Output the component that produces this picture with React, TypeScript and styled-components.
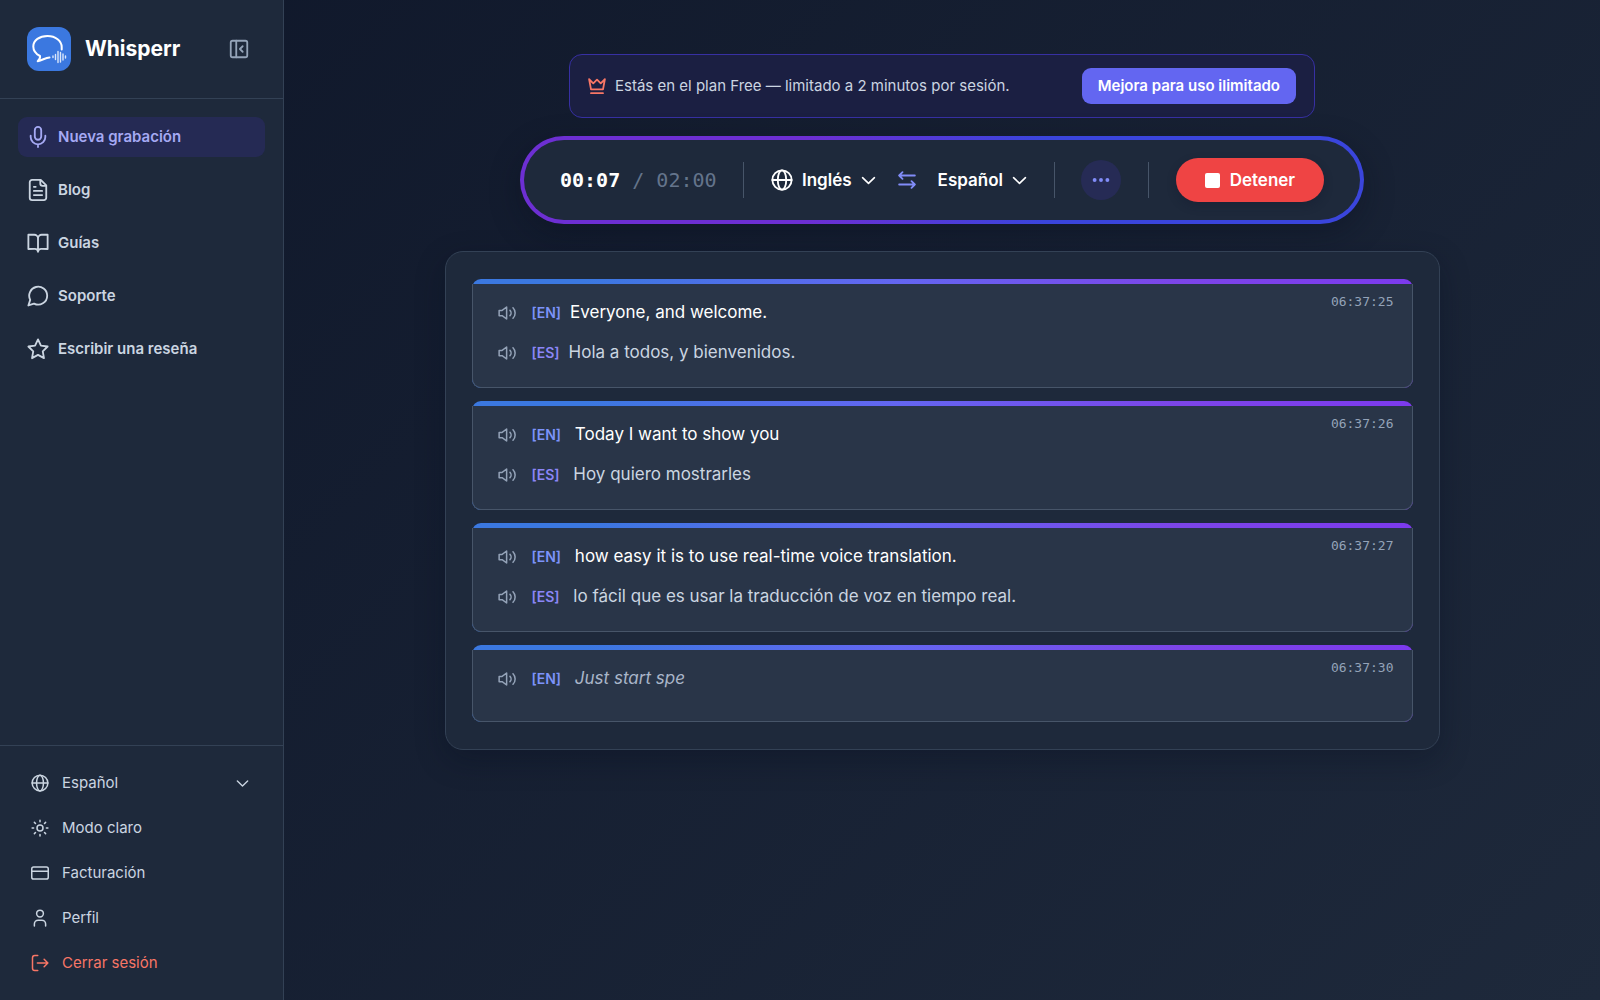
import React from "react";
import styled, { createGlobalStyle } from "styled-components";

const sans = `Inter, "Liberation Sans", sans-serif`;
const mono = `"DejaVu Sans Mono", "Liberation Mono", monospace`;

const GlobalStyle = createGlobalStyle`
  *, *::before, *::after { box-sizing: border-box; }
  body {
    margin: 0;
    font-family: ${sans};
    font-size: 15px;
    line-height: 24px;
    color: #cbd5e1;
    background: #0f172a;
    -webkit-font-smoothing: antialiased;
  }
  button, select { font: inherit; color: inherit; background: none; border: 0; margin: 0; padding: 0; cursor: pointer; }
  a { color: inherit; text-decoration: none; }
  svg { display: block; flex: none; }
`;

const Page = styled.div`
  display: flex;
  min-height: 100vh;
  background: linear-gradient(135deg, #0f172a 0%, #1e293b 100%);
`;

const Sidebar = styled.aside`
  display: flex;
  flex-direction: column;
  flex: none;
  width: 284px;
  background: #1e293b;
  border-right: 1px solid #334155;
`;

const Brand = styled.header`
  display: flex;
  align-items: center;
  gap: 14px;
  height: 99px;
  padding: 0 33px 0 27px;
  border-bottom: 1px solid #334155;
`;

const BrandName = styled.span`
  flex: 1;
  font-size: 21px;
  line-height: 32px;
  font-weight: 700;
  color: #fff;
`;

const IconButton = styled.button`
  display: flex;
  color: #94a3b8;
`;

const Nav = styled.nav`
  display: flex;
  flex-direction: column;
  gap: 13px;
  padding: 18px;
`;

const NavLink = styled.a<{ $active?: boolean }>`
  display: flex;
  align-items: center;
  gap: 9px;
  height: 40px;
  padding: 0 9px;
  border-radius: 9px;
  font-weight: 600;
  color: ${(p) => (p.$active ? "#a5a9f3" : "#cbd5e1")};
  background: ${(p) => (p.$active ? "#252a54" : "transparent")};
`;

const Account = styled.div`
  display: flex;
  flex-direction: column;
  gap: 5px;
  margin-top: auto;
  padding: 17px 18px;
  border-top: 1px solid #334155;
`;

const accountRow = `
  display: flex;
  align-items: center;
  gap: 13px;
  height: 40px;
  padding: 0 16px 0 13px;
  width: 100%;
  text-align: left;
`;

const AccountLink = styled.a`${accountRow}`;
const AccountButton = styled.button<{ $danger?: boolean }>`
  ${accountRow}
  color: ${(p) => (p.$danger ? "#f87666" : "inherit")};
`;
const AccountField = styled.label`${accountRow}`;

const Select = styled.select`
  appearance: none;
  outline: none;
  field-sizing: content;
  option { color: #0f172a; }
`;

const WideSelect = styled(Select)`
  flex: 1;
`;

const Main = styled.main`
  display: flex;
  flex-direction: column;
  align-items: center;
  flex: 1;
  min-width: 0;
  padding: 54px 40px;
`;

const Banner = styled.section`
  display: flex;
  align-items: center;
  gap: 9px;
  width: 100%;
  max-width: 746px;
  height: 64px;
  padding: 0 18px;
  border: 1px solid #3730a3;
  border-radius: 13px;
  background: #1b1f42;
`;

const BannerText = styled.p`
  flex: 1;
  margin: 0;
`;

const UpgradeButton = styled.button`
  height: 36px;
  padding: 0 16px;
  border-radius: 9px;
  font-weight: 600;
  color: #fff;
  background: #6366f1;
`;

const Recorder = styled.section`
  display: flex;
  align-items: center;
  justify-content: space-between;
  width: 100%;
  max-width: 844px;
  height: 88px;
  margin-top: 18px;
  padding: 0 36px;
  border: 4px solid transparent;
  border-radius: 44px;
  background:
    linear-gradient(#1e293b, #1e293b) padding-box,
    linear-gradient(90deg, #6d2fd3 0%, #6d2fd3 34%, #3a45dc 62%, #3a45dc 100%) border-box;
  box-shadow: 0 10px 30px rgba(8, 14, 30, 0.35);
`;

const Timer = styled.div`
  font-family: ${mono};
  font-size: 20px;
  line-height: 28px;
  color: #64748b;
  white-space: nowrap;
`;

const Elapsed = styled.span`
  font-weight: 700;
  color: #fff;
`;

const Divider = styled.span`
  width: 1px;
  height: 36px;
  background: #475569;
`;

const Languages = styled.div`
  display: flex;
  align-items: center;
  gap: 22px;
`;

const LanguageField = styled.label`
  display: flex;
  align-items: center;
  gap: 9px;
  font-size: 17px;
  font-weight: 600;
  color: #fff;
`;

const SwapButton = styled(IconButton)`
  color: #818cf8;
`;

const MoreButton = styled.button`
  display: flex;
  align-items: center;
  justify-content: center;
  width: 40px;
  height: 40px;
  border-radius: 50%;
  color: #818cf8;
  background: #262b55;
`;

const StopButton = styled.button`
  display: flex;
  align-items: center;
  justify-content: center;
  gap: 10px;
  width: 148px;
  height: 44px;
  border-radius: 22px;
  font-size: 17px;
  font-weight: 600;
  color: #fff;
  background: #ef4444;
  box-shadow: 0 4px 10px rgba(15, 23, 42, 0.3);
`;

const StopSquare = styled.span`
  width: 15px;
  height: 15px;
  border-radius: 2px;
  background: #fff;
`;

const Transcript = styled.section`
  display: flex;
  flex-direction: column;
  gap: 13px;
  width: 100%;
  max-width: 995px;
  margin-top: 27px;
  padding: 27px 26px;
  border: 1px solid #334155;
  border-radius: 18px;
  background: #1e293b;
  box-shadow: 0 10px 30px rgba(8, 14, 30, 0.3);
`;

const Card = styled.article`
  padding-top: 5px;
  border-radius: 9px;
  background: linear-gradient(90deg, #3b78e0 0%, #3b78e0 12%, #6366f1 45%, #7c45e8 75%, #7c3aed 100%);
`;

const CardBody = styled.div`
  display: flex;
  align-items: flex-start;
  justify-content: space-between;
  min-height: 72px;
  padding: 13px 18px 20px 25px;
  border: 1px solid #475569;
  border-top: 0;
  border-radius: 0 0 9px 9px;
  background: #293548;
`;

const Lines = styled.div`
  display: flex;
  flex-direction: column;
  gap: 10px;
`;

const Line = styled.div`
  display: flex;
  align-items: center;
  gap: 16px;
  height: 30px;
`;

const SpeakButton = styled(IconButton)`
  padding-top: 2px;
`;

const Phrase = styled.p<{ $tone: Tone }>`
  margin: 0;
  font-size: 17px;
  line-height: 28px;
  white-space: pre-wrap;
  font-style: ${(p) => (p.$tone === "pending" ? "italic" : "normal")};
  color: ${(p) => ({ source: "#fff", target: "#cbd5e1", pending: "#a9b6c9" })[p.$tone]};
`;

const LangTag = styled.span<{ $lang: string }>`
  margin-right: 9px;
  font-size: 14px;
  font-style: normal;
  font-weight: 600;
  color: ${(p) => (p.$lang === "EN" ? "#7c93fa" : "#8b86f7")};
`;

const Time = styled.time`
  font-family: ${mono};
  font-size: 13px;
  line-height: 20px;
  margin-top: -5px;
  color: #94a3b8;
`;

type Tone = "source" | "target" | "pending";
type Entry = { time: string; lines: { lang: string; text: string; tone: Tone }[] };

const entries: Entry[] = [
  {
    time: "06:37:25",
    lines: [
      { lang: "EN", text: "Everyone, and welcome.", tone: "source" },
      { lang: "ES", text: "Hola a todos, y bienvenidos.", tone: "target" },
    ],
  },
  {
    time: "06:37:26",
    lines: [
      { lang: "EN", text: " Today I want to show you", tone: "source" },
      { lang: "ES", text: " Hoy quiero mostrarles", tone: "target" },
    ],
  },
  {
    time: "06:37:27",
    lines: [
      { lang: "EN", text: " how easy it is to use real-time voice translation.", tone: "source" },
      { lang: "ES", text: " lo fácil que es usar la traducción de voz en tiempo real.", tone: "target" },
    ],
  },
  { time: "06:37:30", lines: [{ lang: "EN", text: " Just start spe", tone: "pending" }] },
];

type IconProps = { size: number; stroke?: number; children: React.ReactNode };
const Icon = ({ size, stroke = 2, children }: IconProps) => (
  <svg width={size} height={size} viewBox="0 0 24 24" fill="none" stroke="currentColor" strokeWidth={stroke} strokeLinecap="round" strokeLinejoin="round" aria-hidden="true">
    {children}
  </svg>
);

const GlobeShape = () => (
  <>
    <circle cx="12" cy="12" r="10.5" />
    <ellipse cx="12" cy="12" rx="4.6" ry="10.5" />
    <path d="M1.5 12h21" />
  </>
);

const Chevron = ({ size }: { size: number }) => (
  <Icon size={size} stroke={2.6}><path d="m2.500 7.500 9.500 9 9.500-9" /></Icon>
);

const Logo = () => (
  <svg width="44" height="44" viewBox="0 0 44 44" fill="none" aria-hidden="true">
    <rect width="44" height="44" rx="12" fill="#3b78e0" />
    <g stroke="#fff" strokeWidth="2" strokeLinecap="round" strokeLinejoin="round">
      <path d="M22.500 30.500c-4 0-6.500 2.500-11.800 3.800 1.800-1.800 2.800-3.300 2.300-5.300C9 27 6.300 23.500 6.300 19.500 6.300 13.300 12.500 9 20.500 9s14.200 4.800 14.200 11v2.500" />
      <path d="M26 29v1.500M28.500 27.500v5M31 24.500v11M33.500 25.500v9.500M36 27v6M38.500 29v2" strokeWidth="1.400" stroke="#dbe7fb" />
    </g>
  </svg>
);

const navItems = [
  { label: "Nueva grabación", active: true, icon: <><rect x="8.500" y="1" width="7" height="14" rx="3.500" /><path d="M4 10.500v1.500a8 8 0 0 0 16 0v-1.500M12 20v3" /></> },
  { label: "Blog", icon: <><path d="M15 1H5.500A2.500 2.500 0 0 0 3 3.500v17A2.500 2.500 0 0 0 5.500 23h13a2.500 2.500 0 0 0 2.500-2.500V7zM14.500 1v4a2.500 2.500 0 0 0 2.500 2.500h4M7.500 8.500h2M7.500 13h9M7.500 17.500h9" /></> },
  { label: "Guías", icon: <path d="M1.500 3H8a4 4 0 0 1 4 4v14.500a3.500 3.500 0 0 0-3.500-3h-7zM22.500 3H16a4 4 0 0 0-4 4v14.500a3.500 3.500 0 0 1 3.500-3h7z" /> },
  { label: "Soporte", icon: <path d="M22 11.500a9.800 9.800 0 0 1-14.300 8.800L1.500 22.300l2-6.100A9.800 9.800 0 1 1 22 11.500z" /> },
  { label: "Escribir una reseña", icon: <path d="m12 1.500 3.200 6.800 7.300 1-5.300 5.200 1.300 7.500-6.500-3.600L5.500 22l1.300-7.500L1.500 9.300l7.300-1z" /> },
];

export default function App() {
  return (
    <>
      <GlobalStyle />
      <Page>
        <Sidebar>
          <Brand>
            <Logo />
            <BrandName>Whisperr</BrandName>
            <IconButton aria-label="Contraer barra lateral">
              <Icon size={22}><rect x="3" y="3" width="18" height="18" rx="2" /><path d="M9 3v18M16 9l-3 3 3 3" /></Icon>
            </IconButton>
          </Brand>
          <Nav>
            {navItems.map((item) => (
              <NavLink key={item.label} href="#" $active={item.active}>
                <Icon size={22}>{item.icon}</Icon>
                {item.label}
              </NavLink>
            ))}
          </Nav>
          <Account>
            <AccountField>
              <Icon size={18}><GlobeShape /></Icon>
              <WideSelect aria-label="Idioma de la interfaz"><option>Español</option></WideSelect>
              <Chevron size={13} />
            </AccountField>
            <AccountButton>
              <Icon size={18}><circle cx="12" cy="12" r="4" /><path d="M12 1.500v2M12 20.500v2M1.500 12h2M20.500 12h2M4.500 4.500 6 6M18 18l1.500 1.500M4.500 19.500 6 18M18 6l1.500-1.500" /></Icon>
              Modo claro
            </AccountButton>
            <AccountLink href="#">
              <Icon size={18}><rect x="1" y="4" width="22" height="16" rx="2.500" /><path d="M1 9.500h22" /></Icon>
              Facturación
            </AccountLink>
            <AccountLink href="#">
              <Icon size={18}><circle cx="12" cy="6" r="4.500" /><path d="M4.500 22.500v-2.500a5 5 0 0 1 5-5h5a5 5 0 0 1 5 5v2.500" /></Icon>
              Perfil
            </AccountLink>
            <AccountButton $danger>
              <Icon size={18}><path d="M9 2H5a3 3 0 0 0-3 3v14a3 3 0 0 0 3 3h4M8.500 12H22.500M17.500 7l5 5-5 5" /></Icon>
              Cerrar sesión
            </AccountButton>
          </Account>
        </Sidebar>
        <Main>
          <Banner>
            <Icon size={18} stroke={2.4}><g stroke="#f87666"><path d="m1.500 3 5.500 5.500L12 3.500l5 5L22.500 3l-2.500 13.500H4zM4 21.500h16" /></g></Icon>
            <BannerText>Estás en el plan Free — limitado a 2 minutos por sesión.</BannerText>
            <UpgradeButton>Mejora para uso ilimitado</UpgradeButton>
          </Banner>
          <Recorder>
            <Timer><Elapsed>00:07</Elapsed> / 02:00</Timer>
            <Divider />
            <Languages>
              <LanguageField>
                <Icon size={22}><GlobeShape /></Icon>
                <Select aria-label="Idioma de origen"><option>Inglés</option></Select>
                <Chevron size={15} />
              </LanguageField>
              <SwapButton aria-label="Intercambiar idiomas">
                <Icon size={18} stroke={2.4}><path d="M22.500 6H1.500M6 1.500 1.500 6 6 10.500M1.500 18h21M18 13.500l4.500 4.500-4.500 4.500" /></Icon>
              </SwapButton>
              <LanguageField>
                <Select aria-label="Idioma de destino"><option>Español</option></Select>
                <Chevron size={15} />
              </LanguageField>
            </Languages>
            <Divider />
            <MoreButton aria-label="Más opciones">
              <Icon size={18} stroke={0}><g fill="currentColor"><circle cx="3.500" cy="12" r="2.600" /><circle cx="12" cy="12" r="2.600" /><circle cx="20.500" cy="12" r="2.600" /></g></Icon>
            </MoreButton>
            <Divider />
            <StopButton><StopSquare />Detener</StopButton>
          </Recorder>
          <Transcript>
            {entries.map((entry) => (
              <Card key={entry.time}>
                <CardBody>
                  <Lines>
                    {entry.lines.map((line) => (
                      <Line key={line.lang}>
                        <SpeakButton aria-label={`Escuchar ${line.lang}`}>
                          <Icon size={18}><path d="M1.500 8.500h4L11.500 4v16l-6-4.500h-4zM16 8.500a5 5 0 0 1 0 7M20 5a10 10 0 0 1 0 14" /></Icon>
                        </SpeakButton>
                        <Phrase $tone={line.tone}>
                          <LangTag $lang={line.lang}>[{line.lang}]</LangTag>
                          {line.text}
                        </Phrase>
                      </Line>
                    ))}
                  </Lines>
                  <Time>{entry.time}</Time>
                </CardBody>
              </Card>
            ))}
          </Transcript>
        </Main>
      </Page>
    </>
  );
}
